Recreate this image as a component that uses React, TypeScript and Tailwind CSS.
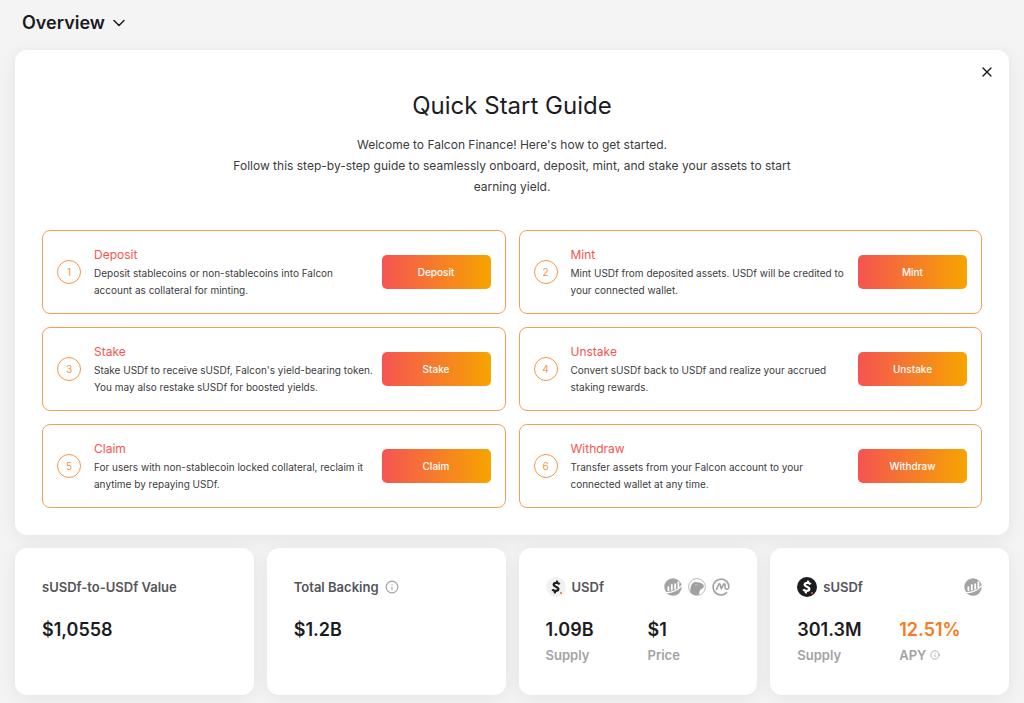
import React, { useState } from 'react'
import { ChevronDown, Info, X } from 'lucide-react'

const steps = [
  { title: 'Deposit', text: 'Deposit stablecoins or non-stablecoins into Falcon\naccount as collateral for minting.' },
  { title: 'Mint', text: 'Mint USDf from deposited assets. USDf will be credited to\nyour connected wallet.' },
  { title: 'Stake', text: "Stake USDf to receive sUSDf, Falcon's yield-bearing token.\nYou may also restake sUSDf for boosted yields." },
  { title: 'Unstake', text: 'Convert sUSDf back to USDf and realize your accrued\nstaking rewards.' },
  { title: 'Claim', text: 'For users with non-stablecoin locked collateral, reclaim it\nanytime by repaying USDf.' },
  { title: 'Withdraw', text: 'Transfer assets from your Falcon account to your\nconnected wallet at any time.' },
]

const ChartBadge: React.FC = () => (
  <svg className="size-[18px]" viewBox="0 0 18 18">
    <circle cx="9" cy="9" r="8.7" fill="#a3a3a3" />
    <path d="M4.4 13V8.6M7.8 12.6V6.2M11.2 11.6V5.4M14.4 10V3.4" stroke="#fff" strokeWidth="1.8" fill="none" />
    <path d="M0.8 14.6C8 15.2 13.8 12.6 18 7.4" stroke="#fff" strokeWidth="1.2" fill="none" />
  </svg>
)

const GeckoBadge: React.FC = () => (
  <svg className="size-[18px]" viewBox="0 0 18 18">
    <circle cx="9" cy="9" r="8.4" fill="#fff" stroke="#b4b4b4" strokeWidth="0.9" />
    <path
      d="M2.4 14.6C2 10.4 3 5.4 6.2 4.2C8 3.4 9.6 4.4 11.2 4.6C13.6 5 15.8 6.2 15.9 8.2C15.8 10 13.8 10.4 12.8 11.4C11.6 12.6 11 14.4 11.2 16.6C8 17.8 4.4 17 2.4 14.6Z"
      fill="#a0a0a0"
    />
    <circle cx="8.4" cy="7" r="1.1" fill="#d6d6d6" />
    <circle cx="8.5" cy="7" r="0.6" fill="#8a8a8a" />
  </svg>
)

const MarketBadge: React.FC = () => (
  <svg className="size-[18px]" viewBox="0 0 18 18" fill="none" stroke="#a3a3a3" strokeWidth="1.6" strokeLinecap="round" strokeLinejoin="round">
    <path d="M14.6 14.6A7.9 7.9 0 1 1 16.9 9C16.9 11.6 13.4 12 13.1 9.6V7C13 5.4 11.8 5.6 11.2 6.8L9.3 10.8L8.2 6.8C7.8 5.6 7 5.6 6.5 6.8L4.6 11.4" />
  </svg>
)

const CoinIcon: React.FC<{ dark?: boolean }> = ({ dark }) => (
  <svg className="size-5" viewBox="0 0 20 20">
    <circle cx="10" cy="10" r="10" fill={dark ? '#1c1c1f' : '#f1f1f1'} />
    <path
      d="M13.6 7.4C12.4 5.4 7.8 5.4 7.6 7.8C7.5 9.8 12.6 9.6 12.4 12C12.1 14.4 7.6 14.4 6.2 12.4M11.2 3.6L10.7 6M9.2 14L8.7 16.4"
      fill="none"
      stroke={dark ? '#fff' : '#1c1c1f'}
      strokeWidth="2.2"
    />
    <circle cx="15" cy="16" r="1" fill="#f0653a" />
  </svg>
)

const StepCard: React.FC<{ number: number; title: string; text: string }> = ({ number, title, text }) => (
  <li className="flex items-center rounded-lg border border-[#f5a05a] p-[14px]">
    <span className="mr-[13px] flex size-6 shrink-0 items-center justify-center rounded-full border border-[#f5964a] text-[10px] text-[#f5964a]">
      {number}
    </span>
    <div className="min-w-0 flex-1 pt-[2px]">
      <h2 className="text-xs leading-4 text-[#f5554f]">{title}</h2>
      <p className="mt-[2px] text-[10px] leading-[17px] whitespace-pre-line text-[#3c3c40]">{text}</p>
    </div>
    <button className="ml-[2px] h-[34px] w-[109px] shrink-0 rounded-[5px] bg-linear-to-r/srgb from-[#f55452] to-[#f7a400] text-[10px] font-medium text-white">
      {title}
    </button>
  </li>
)

const StatCard: React.FC<{ children: React.ReactNode }> = ({ children }) => (
  <section className="min-h-[147px] rounded-xl bg-white px-[27px] pt-7 shadow-[0_3px_18px_rgba(0,0,0,0.07)]">
    {children}
  </section>
)

const Stat: React.FC<{ value: string; label: string; accent?: boolean; info?: boolean }> = ({ value, label, accent, info }) => (
  <div className="flex flex-col-reverse">
    <dt className="flex items-center gap-1 text-[13px] leading-[18px] font-semibold text-[#a3a3a3]">
      {label}
      {info && <Info className="size-[10px]" />}
    </dt>
    <dd className={accent ? 'text-lg leading-8 font-semibold text-[#f97a1c]' : 'text-lg leading-8 font-semibold text-[#1c1c1f]'}>
      {value}
    </dd>
  </div>
)

export default function App() {
  const [guideOpen, setGuideOpen] = useState(true)

  return (
    <main className="min-h-screen bg-[#f4f4f4] px-[15px] pb-2 font-['Inter',sans-serif] text-[#1c1c1f]">
      <header className="flex h-[50px] items-center px-[7px] pb-1">
        <div className="flex items-center gap-1">
          <select aria-label="Page" className="field-sizing-content appearance-none text-lg font-semibold">
            <option>Overview</option>
          </select>
          <ChevronDown className="size-5" strokeWidth={1.8} />
        </div>
      </header>

      {guideOpen && (
        <section className="relative mb-[13px] rounded-xl bg-white px-[27px] pt-[38px] pb-[27px] shadow-[0_3px_18px_rgba(0,0,0,0.07)]">
          <button aria-label="Close" onClick={() => setGuideOpen(false)} className="absolute top-[14px] right-[14px]">
            <X className="size-4" strokeWidth={2} />
          </button>
          <h1 className="text-center text-2xl leading-9">Quick Start Guide</h1>
          <p className="mx-auto mt-[10px] max-w-[560px] text-center text-xs leading-[21px] text-[#3c3c40]">
            Welcome to Falcon Finance! Here's how to get started.
            <br />
            Follow this step-by-step guide to seamlessly onboard, deposit, mint, and stake your assets to start earning yield.
          </p>
          <ol className="mt-[33px] grid grid-cols-2 gap-[13px]">
            {steps.map((step, i) => (
              <StepCard key={step.title} number={i + 1} title={step.title} text={step.text} />
            ))}
          </ol>
        </section>
      )}

      <div className="grid grid-cols-4 gap-[13px]">
        <StatCard>
          <h2 className="text-[13px] leading-[22px] font-semibold text-[#55555a]">sUSDf-to-USDf Value</h2>
          <p className="mt-4 text-lg leading-8 font-semibold">$1,0558</p>
        </StatCard>

        <StatCard>
          <h2 className="flex items-center gap-[6px] text-[13px] leading-[22px] font-semibold text-[#55555a]">
            Total Backing
            <Info className="size-[14px] text-[#a3a3a3]" />
          </h2>
          <p className="mt-4 text-lg leading-8 font-semibold">$1.2B</p>
        </StatCard>

        <StatCard>
          <div className="flex items-center justify-between">
            <h2 className="flex items-center gap-[6px] text-[13px] leading-[22px] font-semibold text-[#55555a]">
              <CoinIcon />
              USDf
            </h2>
            <div className="flex gap-[6px]">
              <ChartBadge />
              <GeckoBadge />
              <MarketBadge />
            </div>
          </div>
          <dl className="mt-4 grid grid-cols-[102px_1fr]">
            <Stat value="1.09B" label="Supply" />
            <Stat value="$1" label="Price" />
          </dl>
        </StatCard>

        <StatCard>
          <div className="flex items-center justify-between">
            <h2 className="flex items-center gap-[6px] text-[13px] leading-[22px] font-semibold text-[#55555a]">
              <CoinIcon dark />
              sUSDf
            </h2>
            <ChartBadge />
          </div>
          <dl className="mt-4 grid grid-cols-[102px_1fr]">
            <Stat value="301.3M" label="Supply" />
            <Stat value="12.51%" label="APY" accent info />
          </dl>
        </StatCard>
      </div>
    </main>
  )
}
